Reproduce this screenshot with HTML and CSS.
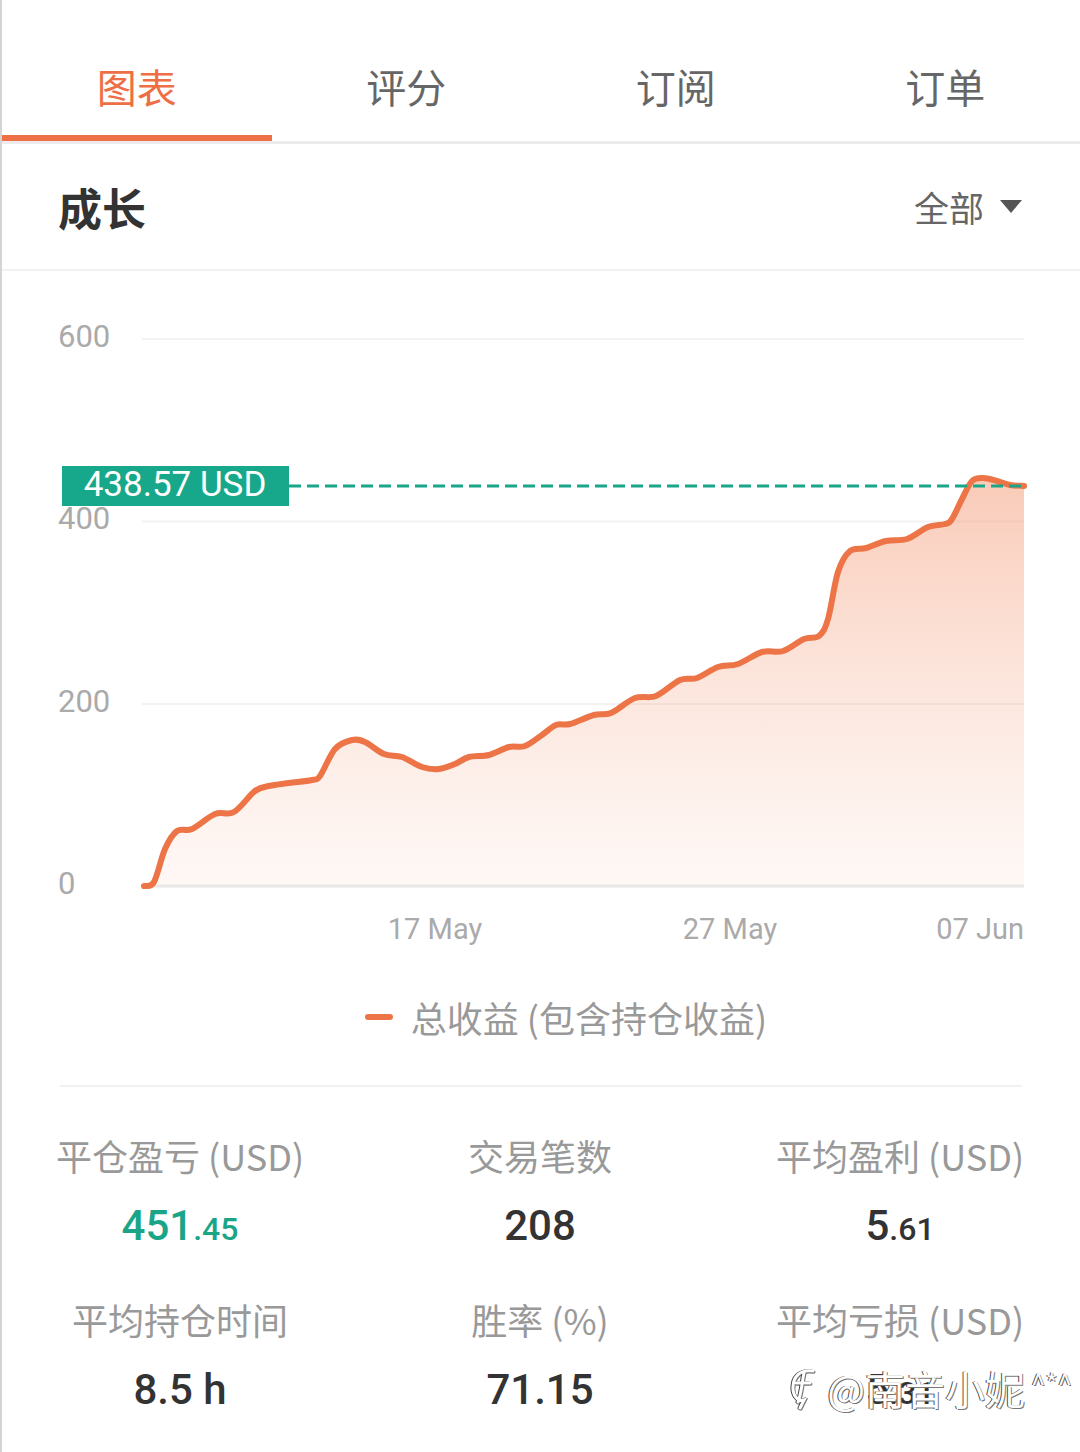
FILE: index.html
```html
<!DOCTYPE html>
<html lang="zh-CN">
<head>
  <meta charset="UTF-8" />
  <meta name="viewport" content="width=device-width, initial-scale=1.0" />
  <title>成长 - 图表</title>
  <link rel="stylesheet" href="styles.css">
</head>
<body>
  <div class="page">
    <nav class="tabs">
      <div class="tab active">图表</div>
      <div class="tab">评分</div>
      <div class="tab">订阅</div>
      <div class="tab">订单</div>
    </nav>

    <div class="section-head">
      <h2>成长</h2>
      <div class="range">
        全部
        <svg width="22" height="14" viewBox="0 0 22 14"><path d="M0 0 H22 L11 13 Z" fill="#555"/></svg>
      </div>
    </div>

    <svg class="chart" viewBox="0 272 1080 700" width="1080" height="700">
      <defs>
        <linearGradient id="fill" x1="0" y1="470" x2="0" y2="887" gradientUnits="userSpaceOnUse">
          <stop offset="0" stop-color="#f5a585" stop-opacity="0.6"/>
          <stop offset="1" stop-color="#f8c7b2" stop-opacity="0.12"/>
        </linearGradient>
      </defs>
      <g class="grid">
        <line x1="140" y1="340" x2="1022" y2="340"/>
        <line x1="140" y1="522.5" x2="1022" y2="522.5"/>
        <line x1="140" y1="705" x2="1022" y2="705"/>
      </g>
      <g class="y-labels">
        <text x="56" y="340">600</text>
        <text x="56" y="522">400</text>
        <text x="56" y="705">200</text>
        <text x="56" y="887">0</text>
      </g>
      <path id="area" fill="url(#fill)"/>
      <line class="base" x1="140" y1="887" x2="1022" y2="887"/>
      <path id="line" class="series"/>
      <line class="marker" x1="287" y1="487" x2="1022" y2="487"/>
      <rect class="badge" x="60" y="467" width="227" height="40"/>
      <text class="badge-text" x="173" y="488">438.57 USD</text>
      <g class="x-labels">
        <text x="433" y="932">17 May</text>
        <text x="728" y="932">27 May</text>
        <text x="1022" y="932" class="end">07 Jun</text>
      </g>
    </svg>

    <div class="legend">
      <span class="legend-mark"></span>
      总收益 (包含持仓收益)
    </div>

    <div class="stats">
      <div class="stat">
        <div class="label">平仓盈亏 (USD)</div>
        <div class="value green">451<small>.45</small></div>
      </div>
      <div class="stat">
        <div class="label">交易笔数</div>
        <div class="value">208</div>
      </div>
      <div class="stat">
        <div class="label">平均盈利 (USD)</div>
        <div class="value">5<small>.61</small></div>
      </div>
      <div class="stat">
        <div class="label">平均持仓时间</div>
        <div class="value">8.5 h</div>
      </div>
      <div class="stat">
        <div class="label">胜率 (%)</div>
        <div class="value">71.15</div>
      </div>
      <div class="stat">
        <div class="label">平均亏损 (USD)</div>
        <div class="value">5<small>.31</small></div>
        <div class="watermark">
          <svg class="wm-logo" width="32" height="44" viewBox="0 0 32 44"><path d="M24 5 C11 3 3 11 4 24 C5 32 11 36 15 34 L11 42 M15 7 C13 15 13 25 9 36 M7 17 H21" fill="none" stroke="#fff" stroke-width="3" stroke-linecap="round"/></svg>
          <span>@南音小妮</span><span class="wm-tail">^*^</span>
        </div>
      </div>
    </div>
  </div>

  <script>
    const points = [
      [142,887],[152,883],[163,850],[175,832],[190,830],[213,815],[232,813],[253,792],
      [267,787],[287,784],[310,781],[318,777],[333,750],[350,741],[363,743],[382,755],
      [400,758],[420,768],[437,770],[453,765],[467,758],[487,756],[507,748],[523,747],
      [540,736],[554,726],[568,725],[592,716],[609,714],[633,699],[654,697],[678,681],
      [695,679],[716,668],[736,665],[760,653],[781,652],[802,640],[817,637],[826,620],
      [836,573],[848,552],[864,549],[884,542],[905,540],[926,528],[943,525],[950,520],
      [960,500],[970,482],[981,479],[995,482],[1008,486],[1022,487]
    ];

    function smoothPath(pts) {
      let d = `M${pts[0][0]},${pts[0][1]}`;
      for (let i = 0; i < pts.length - 1; i++) {
        const p0 = pts[i - 1] || pts[i];
        const p1 = pts[i];
        const p2 = pts[i + 1];
        const p3 = pts[i + 2] || p2;
        const c1x = p1[0] + (p2[0] - p0[0]) / 6;
        const c1y = p1[1] + (p2[1] - p0[1]) / 6;
        const c2x = p2[0] - (p3[0] - p1[0]) / 6;
        const c2y = p2[1] - (p3[1] - p1[1]) / 6;
        d += ` C${c1x.toFixed(1)},${c1y.toFixed(1)} ${c2x.toFixed(1)},${c2y.toFixed(1)} ${p2[0]},${p2[1]}`;
      }
      return d;
    }

    const d = smoothPath(points);
    document.getElementById('line').setAttribute('d', d);
    document.getElementById('area').setAttribute('d', d + ' L1022,887 L142,887 Z');
  </script>
</body>
</html>
```

FILE: styles.css
```css
body {
  margin: 0;
  background: #fff;
  font-family: "Noto Sans CJK SC", "Noto Sans", sans-serif;
}
.page {
  width: 1080px;
  min-height: 1452px;
  box-sizing: border-box;
  border-left: 2px solid #d4d4d4;
  overflow: hidden;
}
.tabs {
  display: grid;
  grid-template-columns: repeat(4, 1fr);
  border-bottom: 3px solid #ececec;
}
.tab {
  box-sizing: border-box;
  height: 141px;
  padding-top: 61px;
  text-align: center;
  font-size: 40px;
  line-height: 50px;
  color: #666;
}
.tab.active {
  color: #ee6f45;
  border-bottom: 6px solid #ee6f45;
}
.section-head {
  display: flex;
  align-items: center;
  justify-content: space-between;
  height: 125px;
  padding: 0 58px 0 56px;
  border-bottom: 2px solid #f1f1f1;
}
.section-head h2 {
  margin: 0;
  font-size: 44px;
  font-weight: 700;
  color: #333;
}
.range {
  display: flex;
  align-items: center;
  gap: 16px;
  font-size: 35px;
  color: #666;
}
.chart {
  display: block;
  font-family: Roboto, "Liberation Sans", sans-serif;
}
.grid line {
  stroke: #f2f2f2;
  stroke-width: 2;
}
.base {
  stroke: #e8e8e8;
  stroke-width: 3;
}
.y-labels text {
  font-size: 31px;
  fill: #aaa;
  dominant-baseline: middle;
}
.x-labels text {
  font-size: 29px;
  fill: #aaa;
  text-anchor: middle;
  dominant-baseline: middle;
}
.x-labels .end {
  text-anchor: end;
}
.series {
  fill: none;
  stroke: #ec7446;
  stroke-width: 6;
  stroke-linecap: round;
  stroke-linejoin: round;
}
.marker {
  stroke: #1aa589;
  stroke-width: 3;
  stroke-dasharray: 12 6;
}
.badge {
  fill: #17a88b;
}
.badge-text {
  fill: #fff;
  font-size: 35px;
  text-anchor: middle;
  dominant-baseline: middle;
}
.legend {
  display: flex;
  align-items: center;
  justify-content: center;
  gap: 18px;
  height: 92px;
  margin: 0 58px;
  padding: 0 0 22px 50px;
  border-bottom: 2px solid #f1f1f1;
  font-size: 36px;
  color: #999;
}
.legend-mark {
  width: 28px;
  height: 6px;
  border-radius: 3px;
  background: #ec7446;
}
.stats {
  display: grid;
  grid-template-columns: repeat(3, 1fr);
  row-gap: 39px;
  margin-left: -2px;
  padding-top: 43px;
}
.stat {
  position: relative;
  text-align: center;
}
.label {
  font-size: 36px;
  line-height: 50px;
  color: #999;
}
.value {
  margin-top: 20px;
  font-family: Roboto, "Liberation Sans", sans-serif;
  font-size: 42px;
  font-weight: 500;
  line-height: 52px;
  color: #333;
}
.value small {
  font-size: 32px;
}
.value.green {
  color: #1aa589;
}
.watermark {
  position: absolute;
  right: 8px;
  bottom: 2px;
  display: flex;
  align-items: center;
  gap: 6px;
  font-size: 40px;
  color: #fff;
  white-space: nowrap;
  text-shadow: -1px 0 #444, 1px 1px #777;
}
.wm-logo {
  filter: drop-shadow(-1px 0 0 #444) drop-shadow(1px 1px 0 #777);
}
.wm-tail {
  align-self: flex-start;
  font-size: 26px;
  margin-top: 4px;
}
```
